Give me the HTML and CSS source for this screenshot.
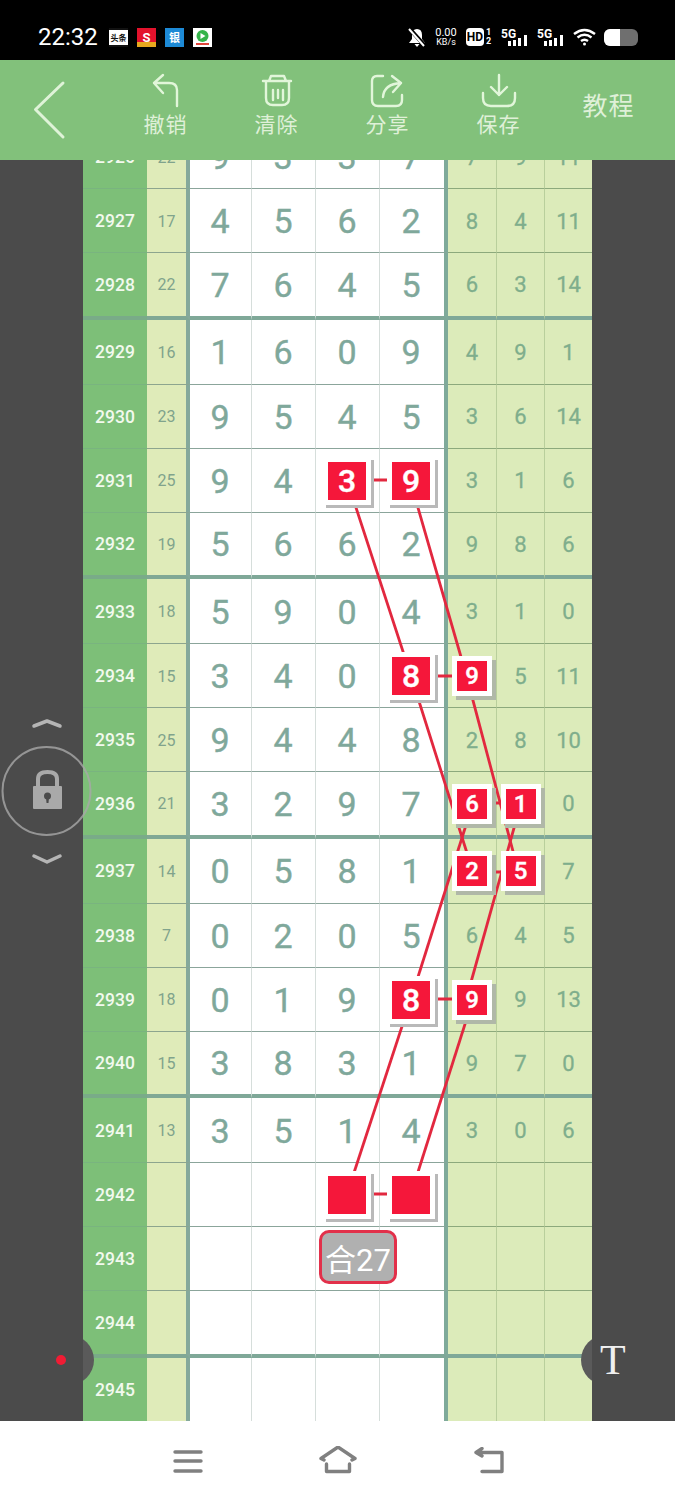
FILE: index.html
```html
<!DOCTYPE html>
<html>
<head>
<meta charset="utf-8">
<title>Trend chart</title>
<link rel="stylesheet" href="styles.css">
</head>
<body>
<div class="statusbar">
  <span class="time">22:32</span>
  <div class="apps">
    <span class="app app-news">头条</span>
    <span class="app app-red">S</span>
    <span class="app app-blue">银</span>
    <span class="app app-video"><svg width="19" height="19" viewBox="0 0 19 19"><circle cx="9.5" cy="8" r="6" fill="#35b44a"/><path d="M7.5 5 L12.5 8 L7.5 11 Z" fill="#fff"/><rect x="3" y="15" width="13" height="2" fill="#e0453a"/></svg></span>
  </div>
  <div class="sysicons">
    <svg width="18" height="20" viewBox="0 0 18 20"><path d="M9 2 Q14 2 14 8 V12 L17 16 H1 L4 12 V8 Q4 2 9 2 Z" fill="#fff"/><path d="M6.500 17 H11.500 L9 20 Z" fill="#fff"/><path d="M1 1 L17 19" stroke="#000" stroke-width="4"/><path d="M1 2 L16 19" stroke="#fff" stroke-width="2"/></svg>
    <div class="speed"><span>0.00</span><span class="speed-unit">KB/s</span></div>
    <div class="hd"><span class="hd-box">HD</span><span class="hd-sim"><i>1</i><i>2</i></span></div>
    <svg width="28" height="20" viewBox="0 0 28 20"><text x="0" y="11" class="fiveg">5G</text><path d="M7 14h3v5H7z M12 13h3v6h-3z M17 11h3v8h-3z M23 8h3v11h-3z" fill="#fff"/></svg>
    <svg width="28" height="20" viewBox="0 0 28 20"><text x="0" y="11" class="fiveg">5G</text><path d="M7 14h3v5H7z M12 13h3v6h-3z M17 11h3v8h-3z M23 8h3v11h-3z" fill="#fff"/></svg>
    <svg width="23" height="18" viewBox="0 0 23 18" fill="none" stroke="#fff" stroke-width="2.400"><path d="M1 6 Q11.500 -2 22 6"/><path d="M4.500 9.500 Q11.500 4 18.500 9.500"/><path d="M8 13 Q11.500 10.500 15 13"/><circle cx="11.500" cy="16" r="1.500" fill="#fff" stroke="none"/></svg>
    <div class="battery"><span class="battery-fill"></span></div>
  </div>
</div>

<div class="toolbar">
  <svg class="back" width="110" height="100" viewBox="0 0 110 100"><path d="M63 23 L35.500 49.500 L63 77" fill="none" stroke="#dff3d8" stroke-width="3" stroke-linecap="round" stroke-linejoin="round"/></svg>
  <div class="tool">
    <svg width="40" height="40" viewBox="0 0 40 40" class="tool-icon"><path d="M31 36 V20 Q31 13 23 13 H8 M17 5 L8 13 L17 23"/></svg>
    <span>撤销</span>
  </div>
  <div class="tool">
    <svg width="40" height="40" viewBox="0 0 40 40" class="tool-icon"><path d="M6 11 H34 M9 11 V28 Q9 35 16 35 H25 Q32 35 32 28 V11 M12 11 L14 6 H27 L29 11 M16 20 V30 M21 20 V28 M26 20 V30"/></svg>
    <span>清除</span>
  </div>
  <div class="tool">
    <svg width="40" height="40" viewBox="0 0 40 40" class="tool-icon"><path d="M15 6 H9 Q4 6 4 11 V30 Q4 36 10 36 H28 Q34 36 34 30 V25 M15 27 Q16 14 33 13 M24 6 L33 13 L25 22"/></svg>
    <span>分享</span>
  </div>
  <div class="tool">
    <svg width="40" height="40" viewBox="0 0 40 40" class="tool-icon"><path d="M20 5 V25 M12 17 L20 25 L28 17 M4 23 V28 Q4 36 12 36 H28 Q36 36 36 28 V23"/></svg>
    <span>保存</span>
  </div>
  <div class="tool tool-text">教程</div>
</div>

<div class="main">
  <div class="board">
    <div class="row first"><div class="no">2926</div><div class="sum">22</div><div class="c">9</div><div class="c">3</div><div class="c">3</div><div class="c">7</div><div class="r">7</div><div class="r">9</div><div class="r">11</div></div>
    <div class="row"><div class="no">2927</div><div class="sum">17</div><div class="c">4</div><div class="c">5</div><div class="c">6</div><div class="c">2</div><div class="r">8</div><div class="r">4</div><div class="r">11</div></div>
    <div class="row end"><div class="no">2928</div><div class="sum">22</div><div class="c">7</div><div class="c">6</div><div class="c">4</div><div class="c">5</div><div class="r">6</div><div class="r">3</div><div class="r">14</div></div>

    <div class="row start"><div class="no">2929</div><div class="sum">16</div><div class="c">1</div><div class="c">6</div><div class="c">0</div><div class="c">9</div><div class="r">4</div><div class="r">9</div><div class="r">1</div></div>
    <div class="row"><div class="no">2930</div><div class="sum">23</div><div class="c">9</div><div class="c">5</div><div class="c">4</div><div class="c">5</div><div class="r">3</div><div class="r">6</div><div class="r">14</div></div>
    <div class="row"><div class="no">2931</div><div class="sum">25</div><div class="c">9</div><div class="c">4</div><div class="c"><b class="mark">3</b></div><div class="c"><b class="mark">9</b></div><div class="r">3</div><div class="r">1</div><div class="r">6</div></div>
    <div class="row end"><div class="no">2932</div><div class="sum">19</div><div class="c">5</div><div class="c">6</div><div class="c">6</div><div class="c">2</div><div class="r">9</div><div class="r">8</div><div class="r">6</div></div>

    <div class="row start"><div class="no">2933</div><div class="sum">18</div><div class="c">5</div><div class="c">9</div><div class="c">0</div><div class="c">4</div><div class="r">3</div><div class="r">1</div><div class="r">0</div></div>
    <div class="row"><div class="no">2934</div><div class="sum">15</div><div class="c">3</div><div class="c">4</div><div class="c">0</div><div class="c"><b class="mark">8</b></div><div class="r"><b class="mark small">9</b></div><div class="r">5</div><div class="r">11</div></div>
    <div class="row"><div class="no">2935</div><div class="sum">25</div><div class="c">9</div><div class="c">4</div><div class="c">4</div><div class="c">8</div><div class="r">2</div><div class="r">8</div><div class="r">10</div></div>
    <div class="row end"><div class="no">2936</div><div class="sum">21</div><div class="c">3</div><div class="c">2</div><div class="c">9</div><div class="c">7</div><div class="r"><b class="mark small">6</b></div><div class="r"><b class="mark small">1</b></div><div class="r">0</div></div>

    <div class="row start"><div class="no">2937</div><div class="sum">14</div><div class="c">0</div><div class="c">5</div><div class="c">8</div><div class="c">1</div><div class="r"><b class="mark small">2</b></div><div class="r"><b class="mark small">5</b></div><div class="r">7</div></div>
    <div class="row"><div class="no">2938</div><div class="sum">7</div><div class="c">0</div><div class="c">2</div><div class="c">0</div><div class="c">5</div><div class="r">6</div><div class="r">4</div><div class="r">5</div></div>
    <div class="row"><div class="no">2939</div><div class="sum">18</div><div class="c">0</div><div class="c">1</div><div class="c">9</div><div class="c"><b class="mark">8</b></div><div class="r"><b class="mark small">9</b></div><div class="r">9</div><div class="r">13</div></div>
    <div class="row end"><div class="no">2940</div><div class="sum">15</div><div class="c">3</div><div class="c">8</div><div class="c">3</div><div class="c">1</div><div class="r">9</div><div class="r">7</div><div class="r">0</div></div>

    <div class="row start"><div class="no">2941</div><div class="sum">13</div><div class="c">3</div><div class="c">5</div><div class="c">1</div><div class="c">4</div><div class="r">3</div><div class="r">0</div><div class="r">6</div></div>
    <div class="row"><div class="no">2942</div><div class="sum"></div><div class="c"></div><div class="c"></div><div class="c"><b class="mark"></b></div><div class="c"><b class="mark"></b></div><div class="r"></div><div class="r"></div><div class="r"></div></div>
    <div class="row"><div class="no">2943</div><div class="sum"></div><div class="c"></div><div class="c"></div><div class="c"><span class="total">合27</span></div><div class="c"></div><div class="r"></div><div class="r"></div><div class="r"></div></div>
    <div class="row end"><div class="no">2944</div><div class="sum"></div><div class="c"></div><div class="c"></div><div class="c"></div><div class="c"></div><div class="r"></div><div class="r"></div><div class="r"></div></div>

    <div class="row start"><div class="no">2945</div><div class="sum"></div><div class="c"></div><div class="c"></div><div class="c"></div><div class="c"></div><div class="r"></div><div class="r"></div><div class="r"></div></div>
  </div>

  <!-- lines between the picked numbers, coords are page coords -->
  <svg class="links" width="675" height="1261" viewBox="0 160 675 1261" fill="none" stroke="#e2283f" stroke-width="2.800">
    <path d="M347 480 H410 M411 676 H473 M473 803 H521 M473 872 H520 M411 999 H473 M347 1194 H411"/>
    <path d="M347 480 L411 676 L473 872"/>
    <path d="M410 480 L466.500 676 L518.500 872"/>
    <path d="M411 999 L473 803"/>
    <path d="M521 803 L466 1000"/>
    <path d="M347 1194 L411 999"/>
    <path d="M411 1194 L473 999"/>
  </svg>

  <svg class="lock" width="94" height="153" viewBox="0 0 94 153">
    <path d="M34 11 L47 6 L60 11" fill="none" stroke="#b5b5b5" stroke-width="3.500" stroke-linecap="round" stroke-linejoin="round"/>
    <circle cx="46.500" cy="76" r="44" fill="none" stroke="#a8a8a8" stroke-opacity="0.800" stroke-width="2"/>
    <path d="M38 72 V64 Q38 57 47.500 57 Q57 57 57 64 V72" fill="none" stroke="#a9a9a9" stroke-width="4"/>
    <rect x="33" y="71" width="29" height="23" rx="1" fill="#a9a9a9"/>
    <circle cx="47.500" cy="81" r="3.500" fill="#4b4b4b"/>
    <path d="M46 82 H49 L48.500 88 H46.500 Z" fill="#4b4b4b"/>
    <path d="M34 141 L47 147 L60 141" fill="none" stroke="#b5b5b5" stroke-width="3.500" stroke-linecap="round" stroke-linejoin="round"/>
  </svg>

  <div class="dock dock-left"></div>
  <span class="dot"></span>
  <div class="dock dock-right"></div>
  <span class="text-btn">T</span>
</div>

<div class="navbar">
  <div class="nav-slot"><svg width="30" height="24" viewBox="0 0 30 24" class="nav-icon"><path d="M2 3 H28 M2 12 H28 M2 22 H28"/></svg></div>
  <div class="nav-slot"><svg width="38" height="30" viewBox="0 0 38 30" class="nav-icon nav-home"><path d="M5 14 L2 12.500 L19 1 L36 12.500 L33 14 M7.500 18 V25.500 H30.500 V18"/></svg></div>
  <div class="nav-slot"><svg width="32" height="28" viewBox="0 0 32 28" class="nav-icon"><path d="M4 5.500 H30 V24.500 H10 M10 1.500 L4 5.500 L10 9"/></svg></div>
</div>
</body>
</html>
```

FILE: styles.css
```css
* {
  box-sizing: border-box;
}

body {
  margin: 0;
  width: 675px;
  height: 1500px;
  overflow: hidden;
  font-family: Roboto, "Noto Sans CJK SC", sans-serif;
  background: #fff;
}

/* status bar */
.statusbar {
  height: 60px;
  background: #000;
  color: #fff;
  display: flex;
  align-items: center;
  padding: 14px 37px 0 38px;
}

.time {
  font-size: 24px;
  width: 71px;
}

.apps {
  display: flex;
  gap: 9px;
}

.app {
  width: 19px;
  height: 19px;
  display: flex;
  align-items: center;
  justify-content: center;
  font-size: 8px;
  font-weight: 700;
  overflow: hidden;
}

.app-news {
  background: #fff;
  color: #111;
  border-top: 2px solid #111;
  border-bottom: 2px solid #111;
}

.app-red {
  background: linear-gradient(#e3122c 75%, #e7a81e 75%);
  color: #fff;
  font-size: 13px;
}

.app-blue {
  background: #1d8ad6;
  color: #fff;
  font-size: 11px;
}

.app-video {
  background: #fff;
}

.sysicons {
  margin-left: auto;
  display: flex;
  align-items: center;
  gap: 8px;
}

.speed {
  display: flex;
  flex-direction: column;
  align-items: center;
  font-size: 11px;
  line-height: 11px;
  width: 24px;
}

.speed-unit {
  font-size: 9px;
  line-height: 9px;
}

.hd {
  display: flex;
  align-items: center;
  gap: 2px;
  width: 27px;
}

.hd-box {
  background: #fff;
  color: #000;
  font-size: 12px;
  font-weight: 700;
  width: 18px;
  height: 18px;
  border-radius: 4px;
  display: flex;
  align-items: center;
  justify-content: center;
}

.hd-sim {
  display: flex;
  flex-direction: column;
  font-size: 9px;
  line-height: 9px;
  font-weight: 700;
}

.hd-sim i {
  font-style: normal;
}

.fiveg {
  font-size: 12px;
  font-weight: 700;
  fill: #fff;
}

.battery {
  width: 34px;
  height: 17px;
  border-radius: 6px;
  background: #6f6f6f;
  overflow: hidden;
}

.battery-fill {
  display: block;
  width: 16px;
  height: 17px;
  background: #fff;
}

/* green toolbar */
.toolbar {
  height: 100px;
  background: #82c17b;
  display: flex;
}

.back {
  flex: none;
}

.tool {
  width: 111px;
  padding-top: 10px;
  display: flex;
  flex-direction: column;
  align-items: center;
  color: #dff0d8;
  font-size: 21px;
  line-height: 30px;
  letter-spacing: 1px;
}

.tool-icon {
  flex: none;
  fill: none;
  stroke: #e2f6da;
  stroke-width: 2.400;
  stroke-linecap: round;
  stroke-linejoin: round;
}

.tool-text {
  padding: 0 2px 6px 0;
  justify-content: center;
  font-size: 25px;
}

/* chart */
.main {
  position: relative;
  height: 1261px;
  overflow: hidden;
  background: #4b4b4b;
}

.board {
  margin: -35px 0 0 83px;
  width: 509px;
}

.row {
  display: grid;
  grid-template-columns: 64px 43px 62px 64px 64px 68px 49px 48px 47px;
  height: 64px;
}

.row.start {
  height: 65px;
}

.row.end {
  height: 66.500px;
}

.row > div {
  display: flex;
  align-items: center;
  justify-content: center;
  padding-top: 1px;
  border-bottom: 1px solid;
  position: relative;
}

.row.end > div {
  border-bottom-width: 4px;
}

.no {
  background: #7dbf78;
  color: #f2f9ee;
  font-size: 17.500px;
  font-weight: 500;
  border-bottom-color: #79b47f !important;
}

.row.end .no {
  border-bottom-color: #79ab88 !important;
}

.sum {
  background: #dfebb9;
  color: #80a38c;
  font-size: 16px;
  border-right: 4px solid #85a99b;
  border-bottom-color: #8da58e !important;
}

.row.end .sum {
  border-bottom-color: #80a895 !important;
}

.c {
  background: #fff;
  color: #7fa89b;
  font-size: 34px;
  -webkit-text-stroke: 0.400px #7fa89b;
  padding-right: 1px;
  border-right: 1px solid #d6dedb;
  border-bottom-color: #8ba59b !important;
}

.row.end .c {
  border-bottom-color: #7fa898 !important;
}

.c:nth-child(6) {
  padding-right: 2px;
  border-right: 4px solid #7faa9a;
}

.r {
  background: #dcebba;
  color: #7fae8c;
  font-size: 22px;
  -webkit-text-stroke: 0.300px #7fae8c;
  border-right: 1px solid #b9cf9c;
  border-bottom-color: #8ca97c !important;
}

.r:last-child {
  border-right: 0;
}

.row.end .r {
  border-bottom-color: #7fa898 !important;
}

/* picked numbers */
.mark {
  position: relative;
  z-index: 2;
  width: 38px;
  height: 38px;
  background: #f5173a;
  color: #fff;
  font-size: 32px;
  font-weight: 500;
  -webkit-text-stroke: 0.400px #fff;
  display: flex;
  align-items: center;
  justify-content: center;
  box-shadow: 0 0 0 5px #fff, 3px 3px 0 5px #b9b9b9;
}

.mark.small {
  width: 30px;
  height: 30px;
  font-size: 24px;
  box-shadow: 0 0 0 5px #fff, 4px 4px 0 5px #b0b8a8;
}

.total {
  position: absolute;
  z-index: 2;
  left: 3px;
  top: 3px;
  width: 78px;
  height: 54px;
  border: 3px solid #e2304a;
  border-radius: 10px;
  background: #b0b0b0;
  color: #fff;
  font-size: 31px;
  -webkit-text-stroke: 0;
  display: flex;
  align-items: center;
  justify-content: center;
}

.links {
  position: absolute;
  left: 0;
  top: 0;
  z-index: 1;
}

/* floating controls */
.lock {
  position: absolute;
  left: 0;
  top: 555px;
  z-index: 3;
}

.dock {
  position: absolute;
  top: 1175px;
  width: 11px;
  height: 50px;
  overflow: hidden;
  z-index: 3;
}

.dock::before {
  content: "";
  position: absolute;
  top: 0;
  width: 50px;
  height: 50px;
  border-radius: 50%;
  background: #5a5a5a;
}

.dock-left {
  left: 83px;
}

.dock-left::before {
  left: -39px;
}

.dock-right {
  left: 581px;
}

.dock-right::before {
  left: 0;
}

.dot {
  position: absolute;
  left: 56px;
  top: 1195px;
  width: 10px;
  height: 10px;
  border-radius: 50%;
  background: #f01c34;
}

.text-btn {
  position: absolute;
  left: 600px;
  top: 1176px;
  z-index: 3;
  font-family: "Liberation Serif", serif;
  font-size: 42px;
  line-height: 48px;
  color: #f0f0f0;
}

/* bottom nav */
.navbar {
  height: 79px;
  background: #fff;
  display: flex;
  justify-content: center;
  align-items: center;
}

.nav-slot {
  width: 150px;
  display: flex;
  justify-content: center;
}

.nav-icon {
  fill: none;
  stroke: #808080;
  stroke-width: 3.400;
  stroke-linecap: round;
  stroke-linejoin: round;
}
```
